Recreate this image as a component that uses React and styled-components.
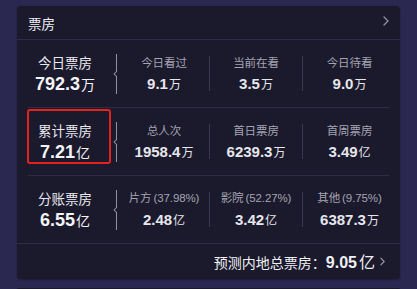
import React from "react";
import styled, { createGlobalStyle } from "styled-components";

const Global = createGlobalStyle`
  html, body { margin: 0; padding: 0; }
  body {
    background: #2a2851;
    width: 417px;
    height: 289px;
    overflow: hidden;
    font-family: "Liberation Sans", "Noto Sans CJK SC", sans-serif;
  }
`;

const Page = styled.div`
  box-sizing: border-box;
  height: 289px;
  overflow: hidden;
  padding: 6px 17px 0 17px;
  display: flex;
  flex-direction: column;
  gap: 9px;
`;

const Card = styled.div`
  flex: none;
  background: #1b1a2c;
  border-radius: 4px;
  box-shadow: 0 1px 2px rgba(0, 0, 0, 0.35);
  overflow: hidden;
`;

const NextCard = styled.div`
  flex: 1;
  background: #1b1a2c;
  border-radius: 4px 4px 0 0;
`;

const Header = styled.div`
  height: 33px;
  display: flex;
  align-items: center;
  justify-content: space-between;
  padding: 0 11px;
  border-bottom: 1px solid #2f2d46;
`;

const Title = styled.span`
  font-family: "Noto Sans CJK SC", sans-serif;
  font-size: 13.5px;
  color: #ececf2;
  line-height: 18px;
`;

const Chevron = ({ w = 6, h = 10, color = "#8f8d9e" }) => (
  <svg width={w} height={h} viewBox="0 0 6 10" fill="none">
    <path d="M1 1 L5 5 L1 9" stroke={color} strokeWidth="1.3" strokeLinecap="round" strokeLinejoin="round" />
  </svg>
);

const HeaderIcon = styled.span`
  display: flex;
  margin-top: -4px;
`;

const Row = styled.div`
  height: 67px;
  display: flex;
  align-items: center;
`;

const Divider = styled.div`
  height: 1px;
  margin: 0 11px;
  background: #2e2c43;
`;

const Lead = styled.div`
  position: relative;
  width: 96px;
  display: flex;
  flex-direction: column;
  align-items: center;
  gap: 2px;
  &::after {
    content: "";
    display: ${(p) => (p.$highlight ? "block" : "none")};
    position: absolute;
    left: 10px;
    right: 2px;
    top: -12px;
    bottom: -1px;
    border: 2px solid #e3221f;
    border-radius: 3px;
    pointer-events: none;
  }
`;

const LeadLabel = styled.span`
  font-family: "Noto Sans CJK SC", sans-serif;
  font-size: 13.5px;
  line-height: 18px;
  color: #e9e9ef;
`;

const LeadValue = styled.span`
  font-size: 18px;
  line-height: 22px;
  font-weight: 700;
  color: #f4f4f8;
  white-space: nowrap;
`;

const Unit = styled.span`
  font-family: "Noto Sans CJK SC", sans-serif;
  font-size: ${(p) => p.$size}px;
  font-weight: 400;
  margin-left: 1px;
`;

const BracketBox = styled.div`
  width: 6px;
  height: 40px;
  display: flex;
`;

const Bracket = () => (
  <BracketBox>
    <svg width="6" height="40" viewBox="0 0 6 40" fill="none">
      <path d="M3.5 0 V17.5 L1.2 20 L3.5 22.5 V40" stroke="#8c8a9b" strokeWidth="1.1" />
    </svg>
  </BracketBox>
);

const Stat = styled.div`
  width: ${(p) => p.$w}px;
  display: flex;
  flex-direction: column;
  align-items: center;
  gap: 4px;
`;

const StatLabel = styled.span`
  font-family: "Noto Sans CJK SC", sans-serif;
  font-size: 11.5px;
  line-height: 16px;
  color: #a4a3b2;
  white-space: nowrap;
  letter-spacing: -0.1px;
`;

const Paren = styled.span`
  font-family: "Liberation Sans", sans-serif;
  font-size: 11.5px;
  margin-left: 2px;
`;

const StatValue = styled.span`
  font-size: 15px;
  line-height: 20px;
  font-weight: 700;
  color: #e6e6ec;
  white-space: nowrap;
`;

const Sep = styled.div`
  width: 1px;
  height: 35px;
  background: #3a384f;
`;

const Footer = styled.div`
  height: 35px;
  border-top: 1px solid #2f2d46;
  display: flex;
  align-items: center;
  justify-content: flex-end;
  padding-right: 15px;
  gap: 5px;
`;

const FooterText = styled.span`
  font-family: "Noto Sans CJK SC", sans-serif;
  font-size: 14px;
  line-height: 20px;
  color: #f0f0f5;
  white-space: nowrap;
`;

const FooterNum = styled.span`
  font-family: "Liberation Sans", sans-serif;
  font-weight: 700;
  font-size: 16px;
`;

const FooterUnit = styled.span`
  font-family: "Noto Sans CJK SC", sans-serif;
  font-weight: 400;
  font-size: 16px;
  margin-left: 2px;
`;

const rows = [
  {
    label: "今日票房",
    value: "792.3",
    unit: "万",
    stats: [
      { label: "今日看过", value: "9.1", unit: "万" },
      { label: "当前在看", value: "3.5", unit: "万" },
      { label: "今日待看", value: "9.0", unit: "万" },
    ],
  },
  {
    label: "累计票房",
    value: "7.21",
    unit: "亿",
    highlight: true,
    stats: [
      { label: "总人次", value: "1958.4", unit: "万" },
      { label: "首日票房", value: "6239.3", unit: "万" },
      { label: "首周票房", value: "3.49", unit: "亿" },
    ],
  },
  {
    label: "分账票房",
    value: "6.55",
    unit: "亿",
    stats: [
      { label: "片方", pct: "(37.98%)", value: "2.48", unit: "亿" },
      { label: "影院", pct: "(52.27%)", value: "3.42", unit: "亿" },
      { label: "其他", pct: "(9.75%)", value: "6387.3", unit: "万" },
    ],
  },
];

const widths = [90, 92, 93];

export default function App() {
  return (
    <>
      <Global />
      <Page>
        <Card>
          <Header>
            <Title>票房</Title>
            <HeaderIcon>
              <Chevron />
            </HeaderIcon>
          </Header>
          {rows.map((r, i) => (
            <React.Fragment key={r.label}>
              {i > 0 && <Divider />}
              <Row>
                <Lead $highlight={r.highlight}>
                  <LeadLabel>{r.label}</LeadLabel>
                  <LeadValue>
                    {r.value}
                    <Unit $size={14}>{r.unit}</Unit>
                  </LeadValue>
                </Lead>
                <Bracket />
                {r.stats.map((s, j) => (
                  <React.Fragment key={s.label}>
                    {j > 0 && <Sep />}
                    <Stat $w={widths[j]}>
                      <StatLabel>
                        {s.label}
                        {s.pct && <Paren>{s.pct}</Paren>}
                      </StatLabel>
                      <StatValue>
                        {s.value}
                        <Unit $size={12}>{s.unit}</Unit>
                      </StatValue>
                    </Stat>
                  </React.Fragment>
                ))}
              </Row>
            </React.Fragment>
          ))}
          <Footer>
            <FooterText>
              预测内地总票房：<FooterNum>9.05</FooterNum>
              <FooterUnit>亿</FooterUnit>
            </FooterText>
            <Chevron w={5} h={9} color="#9a98a8" />
          </Footer>
        </Card>
        <NextCard />
      </Page>
    </>
  );
}
